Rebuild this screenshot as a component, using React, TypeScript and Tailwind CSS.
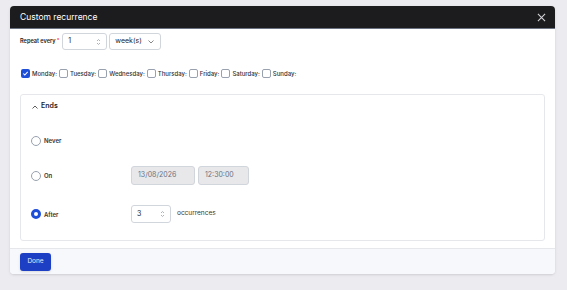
import React, { useState } from 'react';

const days = ['Monday', 'Tuesday', 'Wednesday', 'Thursday', 'Friday', 'Saturday', 'Sunday'];

function Spinner() {
  return (
    <svg width="5" height="8" viewBox="0 0 5 8" className="text-gray-400">
      <path d="M1 3 L2.5 1.5 L4 3" fill="none" stroke="currentColor" strokeWidth="0.8" />
      <path d="M1 5 L2.5 6.5 L4 5" fill="none" stroke="currentColor" strokeWidth="0.8" />
    </svg>
  );
}

function Radio({ checked }: { checked?: boolean }) {
  return checked ? (
    <span className="w-[10px] h-[10px] rounded-full border-[3px] border-[#1f4fd8] bg-white shrink-0" />
  ) : (
    <span className="w-[10px] h-[10px] rounded-full border border-gray-400 bg-white shrink-0" />
  );
}

export default function App() {
  const [checked, setChecked] = useState<string[]>(['Monday']);

  const toggle = (d: string) => {
    setChecked(checked.includes(d) ? checked.filter((x) => x !== d) : [...checked, d]);
  };

  return (
    <div className="w-[567px] h-[290px] bg-[#ececf0] pt-[6px] pl-[10px] overflow-hidden" style={{ fontFamily: 'Inter, "Liberation Sans", sans-serif' }}>
      <div className="w-[545px] h-[268px] bg-white rounded-[4px] overflow-hidden flex flex-col shadow-sm">
        {/* Header */}
        <div className="h-[23px] bg-[#1c1c1e] flex items-center justify-between pl-[10px] pr-[9px] border-b border-gray-500 shrink-0">
          <span className="text-[8.5px] text-white">Custom recurrence</span>
          <svg width="9" height="9" viewBox="0 0 10 10">
            <path d="M1 1 L9 9 M9 1 L1 9" stroke="#d4d4d8" strokeWidth="1.2" />
          </svg>
        </div>

        {/* Body */}
        <div className="flex-1 px-[10px] pt-[4px]">
          <div className="flex items-center gap-[2px]">
            <span className="text-[5.6px] font-semibold text-[#222] mr-[1px]">
              Repeat every<span className="text-red-500 align-top text-[5px] ml-[1px]">*</span>
            </span>
            <div className="w-[45px] h-[17px] border border-gray-300 rounded-[3px] flex items-center justify-between px-[5px]">
              <span className="text-[7px] text-[#222]">1</span>
              <Spinner />
            </div>
            <div className="w-[52px] h-[17px] border border-gray-300 rounded-[3px] flex items-center justify-between pl-[5px] pr-[6px]">
              <span className="text-[7px] text-[#222]">week(s)</span>
              <svg width="6" height="4" viewBox="0 0 6 4">
                <path d="M0.5 0.5 L3 3 L5.5 0.5" fill="none" stroke="#555" strokeWidth="0.7" />
              </svg>
            </div>
          </div>

          <div className="flex items-center mt-[19px] pl-[1px]">
            {days.map((d) => (
              <label key={d} className="flex items-center mr-[2px] cursor-pointer" onClick={() => toggle(d)}>
                {checked.includes(d) ? (
                  <span className="w-[9px] h-[9px] rounded-[2px] bg-[#1f4fd8] flex items-center justify-center">
                    <svg width="7" height="7" viewBox="0 0 8 8">
                      <path d="M1.5 4 L3.2 5.7 L6.5 2.2" fill="none" stroke="white" strokeWidth="1.2" />
                    </svg>
                  </span>
                ) : (
                  <span className="w-[9px] h-[9px] rounded-[2px] border border-gray-400 bg-white" />
                )}
                <span className="text-[6px] font-medium text-[#333] ml-[2px]">{d}:</span>
              </label>
            ))}
          </div>

          {/* Ends */}
          <div className="mt-[16px] h-[147px] border border-gray-200 rounded-[3px] px-[10px]">
            <div className="flex items-center h-[22px] pt-[1px] gap-[3px]">
              <svg width="6" height="4" viewBox="0 0 6 4" className="ml-[1px]">
                <path d="M0.5 3.5 L3 1 L5.5 3.5" fill="none" stroke="#333" strokeWidth="0.8" />
              </svg>
              <span className="text-[7px] font-semibold text-[#222]">Ends</span>
            </div>

            <div className="flex items-center h-[19px] mt-[14px]">
              <Radio />
              <span className="text-[6px] font-semibold text-[#333] ml-[3px]">Never</span>
            </div>

            <div className="flex items-center h-[19px] mt-[16px]">
              <Radio />
              <span className="text-[6px] font-semibold text-[#333] ml-[3px] w-[87px]">On</span>
              <div className="w-[64px] h-[19px] bg-[#e8e8ea] border border-gray-300 rounded-[3px] flex items-center pl-[6px]">
                <span className="text-[7px] text-gray-500">13/08/2026</span>
              </div>
              <div className="w-[51px] h-[19px] bg-[#e8e8ea] border border-gray-300 rounded-[3px] flex items-center pl-[6px] ml-[3px]">
                <span className="text-[7px] text-gray-500">12:30:00</span>
              </div>
            </div>

            <div className="flex items-center h-[18px] mt-[20px]">
              <Radio checked />
              <span className="text-[6px] font-semibold text-[#333] ml-[3px] w-[87px]">After</span>
              <div className="w-[40px] h-[18px] border border-gray-300 rounded-[3px] flex items-center justify-between px-[5px]">
                <span className="text-[7px] text-[#222]">3</span>
                <Spinner />
              </div>
              <span className="text-[6.5px] text-[#333] ml-[6px]">occurrences</span>
            </div>
          </div>
        </div>

        {/* Footer */}
        <div className="h-[26px] bg-[#f7f8fc] border-t border-gray-200 flex items-center px-[10px] shrink-0">
          <button className="w-[31px] h-[18px] bg-[#1d3fc4] rounded-[3px] text-[6.5px] text-white/90 shadow-sm">Done</button>
        </div>
      </div>
    </div>
  );
}
